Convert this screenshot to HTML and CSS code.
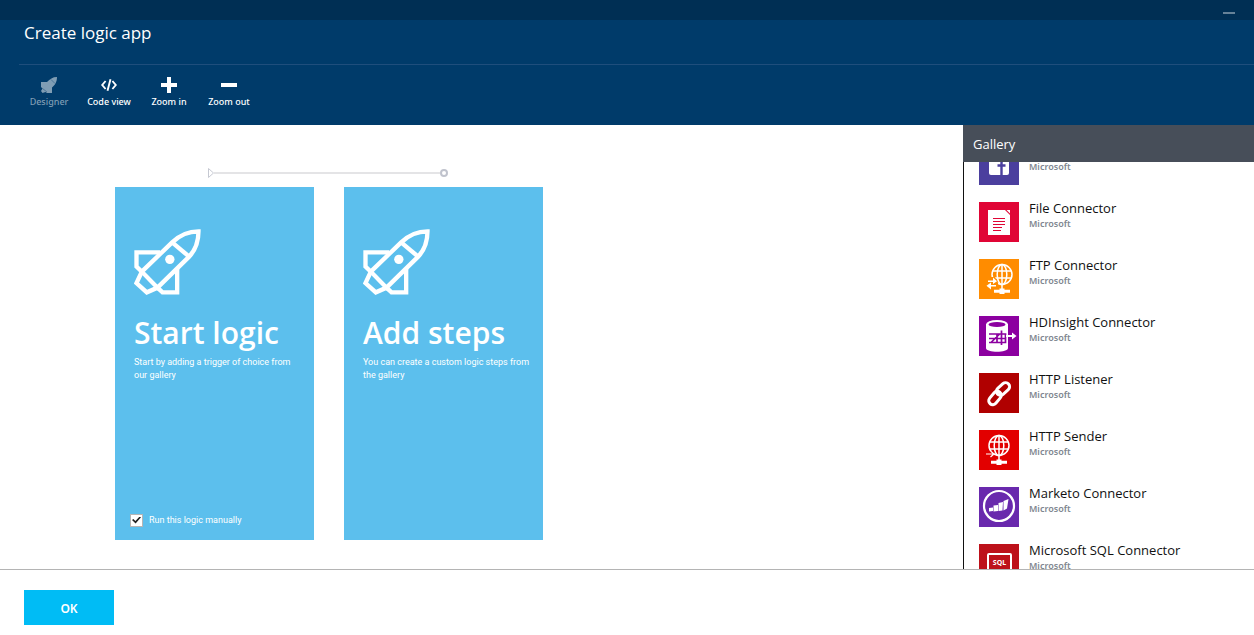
FILE: index.html
```html
<!DOCTYPE html>
<html lang="en">
<head>
<meta charset="utf-8">
<title>Create logic app</title>
<link rel="stylesheet" href="styles.css">
</head>
<body>
<svg class="defs" aria-hidden="true">
  <symbol id="rocket" viewBox="0 0 200 198">
    <g fill="none" stroke="#fff" stroke-width="13">
      <path d="M114 40C137 18 162 7 193 7C193 38 183 64 165 83L70 176L23 128Z"/>
      <path d="M114 40L165 83"/>
      <path d="M78 70H7V113L23 128L7 162L38 190L70 176L85 190H129V118"/>
    </g>
    <circle cx="107" cy="91" r="14" fill="#fff"/>
  </symbol>
  <symbol id="globe" viewBox="0 0 40 40">
    <g fill="none" stroke="#fff" stroke-width="1.500">
      <circle cx="23" cy="15.500" r="10"/>
      <ellipse cx="23" cy="15.500" rx="4.800" ry="10"/>
      <path d="M23 6V31M14 12H32M13.500 19H32.500"/>
    </g>
    <path d="M20.500 29.500h5v1.300h5.500v3h-5.500V35h-5v-1.200H15v-3h5.500z" fill="#fff"/>
  </symbol>
</svg>
<header class="header">
  <div class="titlebar"><button class="minimize" aria-label="Minimize"></button></div>
  <h1 class="title">Create logic app</h1>
  <nav class="toolbar" aria-label="Commands">
    <button class="tool" disabled>
      <svg class="tool-icon" viewBox="0 0 16 16"><path d="M16 0C11.500 0 9 2 6 5H0v5l1.500 1.500L0 14l1.500 2L4.500 15l1.500 1H11V10.500C14 8 16 5 16 0Z" fill="currentColor"/><path d="M10 2.500l4 4M1.500 11.500L6 15" stroke="#003b6a" stroke-width=".4"/></svg>
      Designer</button>
    <button class="tool">
      <svg class="tool-icon" viewBox="0 0 16 16" fill="none" stroke="currentColor" stroke-width="1.900"><path d="M4.600 4L1.200 8l3.400 4M11.400 4l3.400 4-3.400 4M9.500 2.200L6.500 13.800"/></svg>
      Code view</button>
    <button class="tool">
      <svg class="tool-icon" viewBox="0 0 16 16"><path d="M6 0h4v6h6v4h-6v6H6v-6H0V6h6z" fill="currentColor"/></svg>
      Zoom in</button>
    <button class="tool">
      <svg class="tool-icon" viewBox="0 0 16 16"><path d="M0 6h16v4H0z" fill="currentColor"/></svg>
      Zoom out</button>
  </nav>
</header>
<main class="main">
  <section class="canvas">
    <div class="flow">
      <svg class="flow-start" viewBox="0 0 6 10"><path d="M.5 .5v9L5.500 5z" fill="#fff" stroke="#c6c9d2"/></svg>
      <span class="flow-line"></span>
      <span class="flow-end"></span>
    </div>
    <div class="cards">
      <article class="card">
        <svg class="rocket"><use href="#rocket"/></svg>
        <h2 class="card-title">Start logic</h2>
        <p class="card-text">Start by adding a trigger of choice from our gallery</p>
        <label class="manual"><input class="check" type="checkbox" checked>Run this logic manually</label>
      </article>
      <article class="card">
        <svg class="rocket"><use href="#rocket"/></svg>
        <h2 class="card-title">Add steps</h2>
        <p class="card-text">You can create a custom logic steps from the gallery</p>
      </article>
    </div>
  </section>
  <aside class="gallery">
    <h2 class="gallery-title">Gallery</h2>
    <div class="viewport">
      <ul class="list">
        <li class="item">
          <svg class="logo" viewBox="0 0 40 40"><path d="M0 0h40v40H0z" fill="#4b3f9e"/><rect x="10" y="9" width="20" height="21" rx="2" fill="#fff"/><path d="M22.500 30V18q0-3 3-3h2M18.500 20.500h8" fill="none" stroke="#4b3f9e" stroke-width="2.400"/></svg>
          <div><div class="name"></div><div class="vendor">Microsoft</div></div>
        </li>
        <li class="item">
          <svg class="logo" viewBox="0 0 40 40"><path d="M0 0h40v40H0z" fill="#e00535"/><path d="M9 8h17l5 5v20H9z" fill="#fff"/><path d="M27.500 8h3.500v3.500z" fill="#fff"/><path d="M14 16.500h12M14 19.500h12M14 22.500h12M14 25.500h9M14 28.500h8" stroke="#e00535"/></svg>
          <div><div class="name">File Connector</div><div class="vendor">Microsoft</div></div>
        </li>
        <li class="item">
          <svg class="logo" viewBox="0 0 40 40"><path d="M0 0h40v40H0z" fill="#ff8c00"/><use href="#globe" width="40" height="40"/><path d="M7 18h9l3 6v6H7z" fill="#ff8c00"/><path d="M9 22.300h6M17 26.700h-6" stroke="#fff" stroke-width="1.600"/><path d="M14 18.500l4 3.800-4 2.700zM12 23.500l-4.500 3.200 4.500 3.800z" fill="#fff"/></svg>
          <div><div class="name">FTP Connector</div><div class="vendor">Microsoft</div></div>
        </li>
        <li class="item">
          <svg class="logo" viewBox="0 0 40 40"><path d="M0 0h40v40H0z" fill="#8c00a0"/><path d="M7 8v24c0 5 22 5 22 0V8z" fill="#fff"/><ellipse cx="18" cy="8.500" rx="11" ry="4.500" fill="#fff"/><ellipse cx="18" cy="8.500" rx="8.500" ry="2.500" fill="#8c00a0"/><path d="M10 18h10.500L12 26.500M10 22.500h17M18 26.500v-9M22.500 14.500V29M10 26.500h16.500v-8.500H20" fill="none" stroke="#8c00a0" stroke-width="1.700"/><path d="M27 20h8" stroke="#fff" stroke-width="2"/><path d="M33 16.500l4.500 3.500-4.500 3.500z" fill="#fff"/></svg>
          <div><div class="name">HDInsight Connector</div><div class="vendor">Microsoft</div></div>
        </li>
        <li class="item">
          <svg class="logo" viewBox="0 0 40 40"><path d="M0 0h40v40H0z" fill="#b00000"/><g fill="none" stroke="#fff" stroke-width="3"><rect x="-7.500" y="-4" width="15" height="8" rx="4" transform="translate(24 16) rotate(-42)"/><rect x="-7.500" y="-4" width="15" height="8" rx="4" transform="translate(16 25) rotate(-50)"/></g></svg>
          <div><div class="name">HTTP Listener</div><div class="vendor">Microsoft</div></div>
        </li>
        <li class="item">
          <svg class="logo" viewBox="0 0 40 40"><path d="M0 0h40v40H0z" fill="#e20000"/><use href="#globe" x="-3" y="0" width="40" height="40"/><path d="M7 21h8v6H7z" fill="#e20000"/><path d="M7 24h7M11.500 21l3.500 3-3.500 3" fill="none" stroke="#fff" stroke-width="1.200"/></svg>
          <div><div class="name">HTTP Sender</div><div class="vendor">Microsoft</div></div>
        </li>
        <li class="item">
          <svg class="logo" viewBox="0 0 40 40"><path d="M0 0h40v40H0z" fill="#6929ad"/><circle cx="20" cy="19" r="15" fill="none" stroke="#fff" stroke-width="2.200"/><path d="M10 21l4-.5v3.500l-4 .5zM14.500 18.500l4.500-.5v6l-4.500.5zM19.500 16l4.500-1-.5 8.500-4 .5zM24.500 14l5-2-1.500 9.500-3.500 2z" fill="#fff"/></svg>
          <div><div class="name">Marketo Connector</div><div class="vendor">Microsoft</div></div>
        </li>
        <li class="item">
          <svg class="logo" viewBox="0 0 40 40"><path d="M0 0h40v40H0z" fill="#bd111a"/><rect x="9" y="10" width="23" height="20" rx="1" fill="none" stroke="#fff" stroke-width="2"/><text class="sql" x="20.500" y="21" text-anchor="middle">SQL</text></svg>
          <div><div class="name">Microsoft SQL Connector</div><div class="vendor">Microsoft</div></div>
        </li>
      </ul>
    </div>
  </aside>
</main>
<footer class="footer"><button class="ok">OK</button></footer>
</body>
</html>
```
FILE: styles.css
```css
* { box-sizing: border-box; }
body {
  margin: 0;
  height: 100vh;
  display: flex;
  flex-direction: column;
  overflow: hidden;
  background: #fff;
  color: #111;
  font-family: "Noto Sans", "Open Sans", sans-serif;
}
button { border: 0; padding: 0; font-family: inherit; color: inherit; background: none; }
h1, h2, p, ul { margin: 0; padding: 0; font-weight: 400; }
.defs { display: none; }

.header { background: #003b6a; color: #fff; }
.titlebar {
  display: flex;
  justify-content: flex-end;
  height: 20px;
  padding: 12px 19px 0 0;
  background: #002f54;
}
.minimize { width: 12px; height: 2px; background: #668298; }
.title {
  padding-left: 24px;
  height: 44px;
  font-family: "Open Sans", sans-serif;
  font-size: 17px;
  line-height: 26px;
}
.toolbar {
  display: flex;
  margin-left: 19px;
  height: 61px;
  padding-top: 12px;
  border-top: 1px solid #1f4e7c;
}
.tool {
  width: 60px;
  display: flex;
  flex-direction: column;
  align-items: center;
  gap: 2px;
  font-size: 9px;
  line-height: 14px;
  white-space: nowrap;
  font-weight: 500;
}
.tool:disabled { color: #7f9db4; }
.tool-icon { width: 16px; height: 16px; }

.main { flex: 1; min-height: 0; display: flex; }
.canvas { flex: 1; padding: 43px 0 29px 115px; display: flex; flex-direction: column; }
.flow { display: flex; align-items: center; width: 240px; height: 10px; margin: 0 0 9px 93px; }
.flow-start { width: 6px; height: 10px; }
.flow-line { flex: 1; height: 2px; background: #e4e4e6; }
.flow-end { width: 8px; height: 8px; border: 2px solid #c0c3cd; border-radius: 50%; }
.cards { flex: 1; display: flex; gap: 30px; }
.card {
  width: 199px;
  display: flex;
  flex-direction: column;
  padding: 42px 10px 13px 19px;
  background: #5cbfed;
  color: #fff;
}
.rocket { width: 67px; height: 66px; }
.card-title {
  margin-top: 18px;
  font-family: "Open Sans", sans-serif;
  font-size: 30px;
  line-height: 40px;
  font-weight: 600;
  white-space: nowrap;
}
.card-text, .manual { font-family: Roboto, sans-serif; font-size: 9px; }
.card-text { margin-top: 3px; line-height: 13px; }
.manual { display: flex; align-items: center; gap: 6px; margin: auto 0 0 -4px; line-height: 14px; }
.check {
  appearance: none;
  width: 13px;
  height: 13px;
  margin: 0;
  display: grid;
  place-items: center;
  border: 1px solid #b5b5b5;
  background: #fff;
}
.check:checked::before {
  content: "";
  width: 9px;
  height: 7px;
  background: #222;
  clip-path: polygon(0 50%, 15% 35%, 38% 65%, 85% 0, 100% 12%, 40% 100%);
}

.gallery { width: 291px; display: flex; flex-direction: column; border-left: 1px solid #111; }
.gallery-title {
  height: 37px;
  margin-left: -1px;
  padding-left: 10px;
  background: #474e59;
  color: #fff;
  font-family: "Open Sans", sans-serif;
  font-size: 13px;
  line-height: 39px;
}
.viewport { flex: 1; min-height: 0; overflow: hidden; }
.list { list-style: none; margin-top: -17px; padding-left: 15px; }
.item { display: flex; gap: 10px; height: 57px; }
.logo { width: 40px; height: 40px; }
.name { min-height: 12px; font-family: "Open Sans", sans-serif; font-size: 13px; line-height: 12px; }
.vendor { margin-top: 3px; font-size: 9px; line-height: 14px; color: #7f8790; font-weight: 600; }
.sql { font: 700 7px "Noto Sans", sans-serif; fill: #fff; }

.footer { height: 66px; padding: 20px 24px; border-top: 1px solid #b4b4b4; }
.ok { width: 90px; height: 35px; padding-top: 2px; background: #00bcf5; color: #fff; font-size: 12px; font-weight: 600; }
```
